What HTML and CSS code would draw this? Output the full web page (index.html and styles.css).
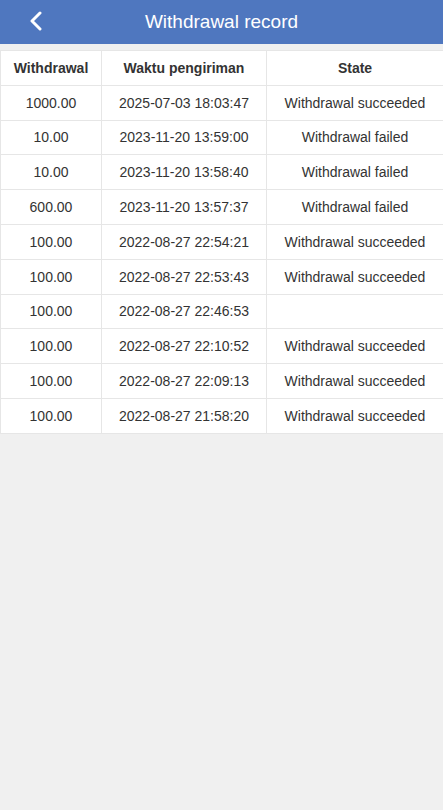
FILE: index.html
```html
<!DOCTYPE html>
<html lang="en">
<head>
<meta charset="UTF-8" />
<meta name="viewport" content="width=device-width, initial-scale=1" />
<title>Withdrawal record</title>
<link rel="stylesheet" href="styles.css">
</head>
<body>

<div class="topbar">
  <a class="back" href="#" title="Back">
    <svg width="14" height="20" viewBox="0 0 14 20"><path d="M11 2 L3 10 L11 18" fill="none" stroke="#fff" stroke-width="3" stroke-linecap="round" stroke-linejoin="round"/></svg>
  </a>
  <div class="title">Withdrawal record</div>
</div>

<div class="content">
  <table class="record">
    <thead>
      <tr><th class="c1">Withdrawal</th><th class="c2">Waktu pengiriman</th><th class="c3">State</th></tr>
    </thead>
    <tbody>
      <tr><td>1000.00</td><td>2025-07-03 18:03:47</td><td>Withdrawal succeeded</td></tr>
      <tr><td>10.00</td><td>2023-11-20 13:59:00</td><td>Withdrawal failed</td></tr>
      <tr><td>10.00</td><td>2023-11-20 13:58:40</td><td>Withdrawal failed</td></tr>
      <tr><td>600.00</td><td>2023-11-20 13:57:37</td><td>Withdrawal failed</td></tr>
      <tr><td>100.00</td><td>2022-08-27 22:54:21</td><td>Withdrawal succeeded</td></tr>
      <tr><td>100.00</td><td>2022-08-27 22:53:43</td><td>Withdrawal succeeded</td></tr>
      <tr><td>100.00</td><td>2022-08-27 22:46:53</td><td></td></tr>
      <tr><td>100.00</td><td>2022-08-27 22:10:52</td><td>Withdrawal succeeded</td></tr>
      <tr><td>100.00</td><td>2022-08-27 22:09:13</td><td>Withdrawal succeeded</td></tr>
      <tr><td>100.00</td><td>2022-08-27 21:58:20</td><td>Withdrawal succeeded</td></tr>
    </tbody>
  </table>
</div>

</body>
</html>
```

FILE: styles.css
```css
body {
  margin: 0;
  font-family: "Liberation Sans", Arial, sans-serif;
  background: #f0f0f0;
  color: #333;
  min-height: 100vh;
}
.topbar {
  height: 44px;
  background: #4f77bf;
  display: flex;
  align-items: center;
  justify-content: center;
  position: relative;
}
.back {
  position: absolute;
  left: 29px;
  top: 11px;
  display: flex;
}
.title {
  color: #fff;
  font-size: 19px;
}
.content {
  padding-top: 6px;
  overflow: hidden;
}
.record {
  border-collapse: collapse;
  background: #fff;
  width: 444px;
  table-layout: fixed;
  font-size: 14px;
}
.record th, .record td {
  border: 1px solid #e6e6e6;
  height: 33.8px;
  padding: 0;
  text-align: center;
  white-space: nowrap;
}
.record th {
  font-weight: bold;
}
.record .c1 { width: 100px; }
.record .c2 { width: 164px; }
```
